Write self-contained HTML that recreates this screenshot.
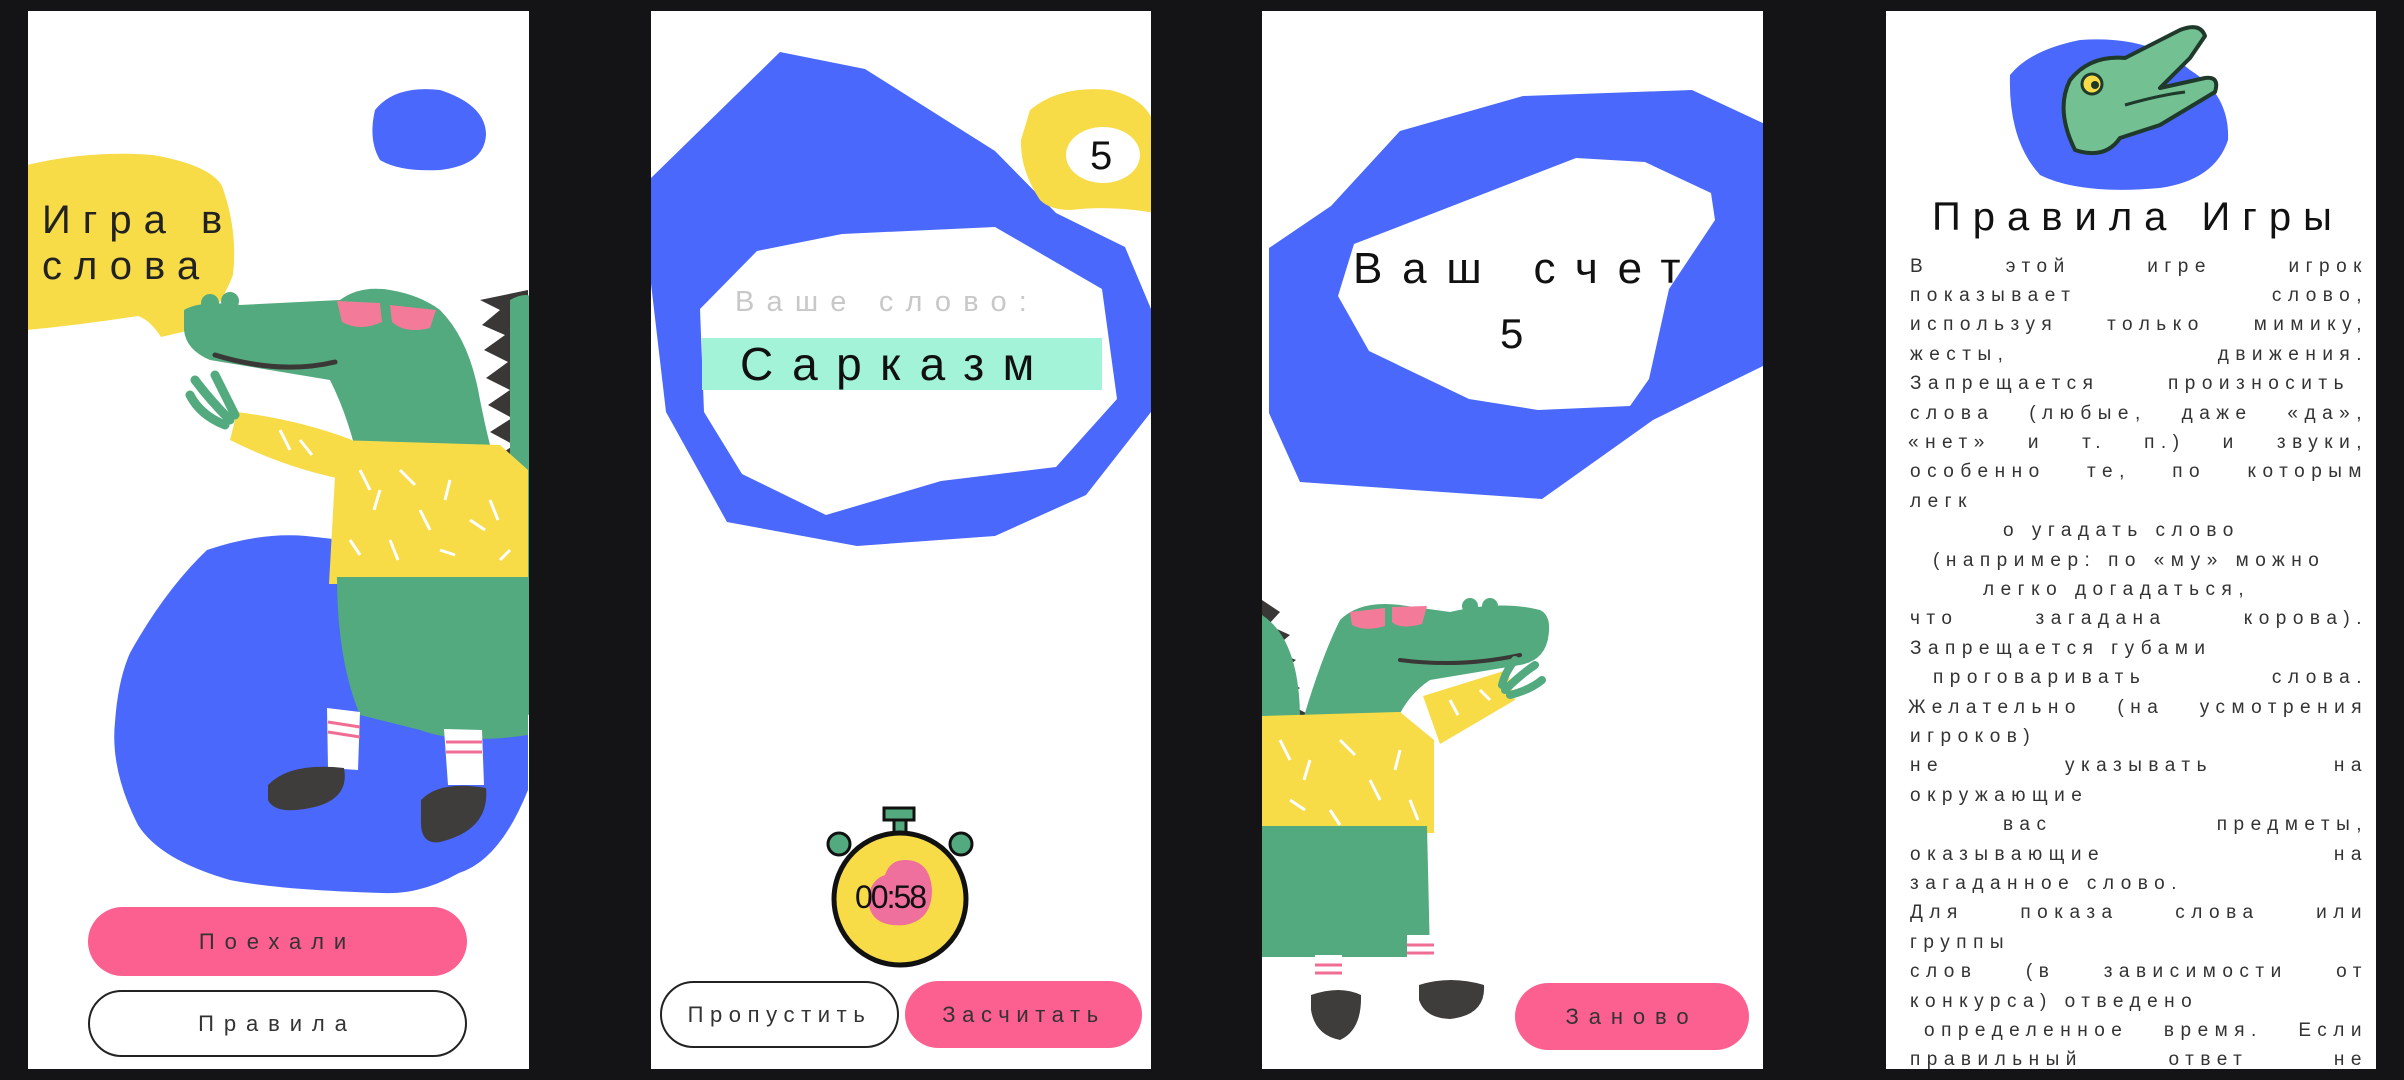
<!DOCTYPE html>
<html><head><meta charset="utf-8">
<style>
*{margin:0;padding:0;box-sizing:border-box}
body{width:2404px;height:1080px;background:#141416;position:relative;overflow:hidden;font-family:"Liberation Sans","DejaVu Sans",sans-serif;color:#222}
.t{position:absolute;white-space:nowrap}
.btn{position:absolute;border-radius:40px;display:flex;align-items:center;justify-content:center;font-size:22px;letter-spacing:0.45em;color:#333}
.pink{background:#fb6090}
.out{background:#fff;border:2px solid #222}
.ln{position:absolute;font-size:19px;letter-spacing:6.5px;color:#333;white-space:nowrap;height:29px;line-height:29px}
.j{text-align:justify;text-align-last:justify;white-space:normal;overflow:hidden}
</style></head><body>
<svg width="2404" height="1080" style="position:absolute;left:0;top:0">
<defs>
<clipPath id="c1"><rect x="28" y="11" width="501" height="1058"/></clipPath>
<clipPath id="c2"><rect x="651" y="11" width="500" height="1058"/></clipPath>
<clipPath id="c3"><rect x="1262" y="11" width="501" height="1058"/></clipPath>
<clipPath id="c4"><rect x="1886" y="11" width="490" height="1058"/></clipPath>
</defs>
<rect x="28" y="11" width="501" height="1058" fill="#fff"/>
<rect x="651" y="11" width="500" height="1058" fill="#fff"/>
<rect x="1262" y="11" width="501" height="1058" fill="#fff"/>
<rect x="1886" y="11" width="490" height="1058" fill="#fff"/>

<!-- panel 1 -->
<g clip-path="url(#c1)">
<path d="M375 110 Q395 85 440 90 Q486 105 486 135 Q484 165 440 170 Q400 172 380 160 Q368 140 375 110Z" fill="#4a68fb"/>
<path d="M27 165 Q90 150 153 155 Q210 165 222 186 Q238 230 233 275 Q215 320 191 330 L161 337 Q150 320 138 316 Q80 325 27 330Z" fill="#f7dc48"/>
<path d="M207 550 Q260 532 306 536 Q420 548 490 564 Q528 590 528 619 L528 790 Q500 860 459 873 Q420 895 383 893 Q280 890 230 880 Q160 860 138 825 Q110 770 115 722 Q118 680 130 653 Q165 590 207 550Z" fill="#4a68fb"/>
<path d="M480 300 L500 310 L482 325 L505 335 L484 350 L508 362 L486 378 L510 390 L488 405 L512 418 L490 432 L514 445 L492 460 L528 470 L528 290Z" fill="#3a3836"/>
<path d="M510 300 Q528 290 535 300 L535 720 L510 700Z" fill="#52aa7e"/>
<path d="M184 310 Q200 300 240 305 L340 300 Q360 285 390 290 Q420 295 440 310 Q470 340 480 400 Q490 450 500 480 L360 470 Q350 420 330 380 L210 360 Q186 350 184 330Z" fill="#52aa7e"/>
<circle cx="210" cy="303" r="9" fill="#52aa7e"/><circle cx="230" cy="301" r="9" fill="#52aa7e"/>
<path d="M215 355 Q280 375 335 362" stroke="#3a3836" stroke-width="5" fill="none" stroke-linecap="round"/>
<path d="M337 301 L380 303 L382 322 Q360 332 342 322Z M390 305 L436 310 L430 328 Q405 334 392 322Z" fill="#f47a9a"/>
<path d="M337 440 L500 445 L528 470 L528 584 L329 584Z" fill="#f7dc48"/>
<path d="M237 412 Q300 420 352 440 L352 481 Q290 470 230 440Z" fill="#f7dc48"/>
<path d="M230 420 Q210 400 195 380 M225 425 Q200 415 190 395 M235 415 Q225 395 215 375" stroke="#52aa7e" stroke-width="9" stroke-linecap="round"/>
<path d="M337 577 L528 577 L528 735 Q460 745 420 730 L360 715 Q337 660 337 577Z" fill="#52aa7e"/>
<path d="M327 708 L360 712 L358 770 L328 768Z M444 729 L482 730 L484 785 L448 785Z" fill="#fff"/>
<path d="M328 722 L360 727 M328 732 L360 737 M446 742 L482 742 M446 752 L482 752" stroke="#f06d94" stroke-width="3"/>
<path d="M268 785 Q290 762 344 768 Q350 800 310 808 Q275 815 268 800Z M421 800 Q440 780 486 788 Q490 830 440 842 Q420 845 421 820Z" fill="#3f3d3b"/>
<g stroke="#fff" stroke-width="3" fill="none"><path d="M360 470 l10 20 M380 490 l-6 20 M400 470 l15 15 M420 510 l10 20 M450 480 l-5 20 M470 520 l15 10 M350 540 l10 15 M390 540 l8 20 M440 550 l15 5 M490 500 l8 20 M500 560 l10 -10 M280 430 l10 20 M300 440 l12 15"/></g>
</g>

<!-- panel 2 -->
<g clip-path="url(#c2)">
<path fill-rule="evenodd" fill="#4a68fb" d="M650 179 L780 52 L865 69 L995 151 L1056 213 L1125 247 L1151 309 L1151 412 L1086 495 L995 536 L857 546 L727 522 L666 412 L650 275Z M757 251 L842 234 L995 227 L1102 289 L1117 399 L1056 467 L941 481 L826 515 L742 474 L704 412 L700 309Z"/>
<path d="M1030 110 Q1060 85 1110 90 Q1151 100 1155 130 L1155 213 Q1110 205 1070 210 Q1050 210 1040 200 Q1020 170 1021 140Z" fill="#f7dc48"/>
<ellipse cx="1103" cy="155" rx="37" ry="28" fill="#fff"/>
<rect x="702" y="338" width="400" height="52" fill="#a3f3d9"/>
<rect x="884" y="808" width="30" height="12" fill="#52aa7e" stroke="#111" stroke-width="3"/>
<rect x="894" y="820" width="12" height="14" fill="#52aa7e" stroke="#111" stroke-width="3"/>
<circle cx="839" cy="844" r="11" fill="#52aa7e" stroke="#111" stroke-width="3"/>
<circle cx="961" cy="844" r="11" fill="#52aa7e" stroke="#111" stroke-width="3"/>
<circle cx="900" cy="899" r="66" fill="#f7dc48" stroke="#111" stroke-width="5"/>
<path d="M905 860 Q930 860 932 890 Q932 920 905 925 Q870 928 868 900 Q870 880 885 875 Q890 860 905 860Z" fill="#ef6f9d"/>
</g>

<!-- panel 3 -->
<g clip-path="url(#c3)">
<path fill-rule="evenodd" fill="#4a68fb" d="M1269 248 L1331 206 L1400 131 L1523 96 L1692 90 L1765 124 L1765 365 L1653 420 L1542 499 L1300 482 L1269 413Z M1354 244 L1576 158 L1645 162 L1711 193 L1715 220 L1669 289 L1649 379 L1630 406 L1538 410 L1469 399 L1369 351 L1338 296Z"/>
<path d="M1262 600 L1280 612 L1268 625 L1290 635 L1272 650 L1296 660 L1276 675 L1300 688 L1280 700 L1310 715 L1262 720Z" fill="#3a3836"/>
<path d="M1262 615 Q1300 640 1300 720 L1262 720Z" fill="#52aa7e"/>
<path d="M1549 630 Q1548 660 1520 665 L1430 680 Q1400 700 1390 740 L1300 730 Q1320 660 1340 620 Q1360 600 1400 605 L1450 612 Q1500 600 1540 610 Q1550 615 1549 630Z" fill="#52aa7e"/>
<circle cx="1470" cy="606" r="8" fill="#52aa7e"/><circle cx="1490" cy="606" r="8" fill="#52aa7e"/>
<path d="M1400 660 Q1460 668 1520 655" stroke="#3a3836" stroke-width="4" fill="none" stroke-linecap="round"/>
<path d="M1350 612 L1385 608 L1385 626 Q1365 632 1352 625Z M1392 607 L1427 606 L1422 624 Q1400 630 1392 622Z" fill="#f47a9a"/>
<path d="M1261 716 L1400 712 L1434 740 L1434 833 L1261 833Z" fill="#f7dc48"/>
<path d="M1423 696 L1507 670 L1515 700 L1440 744Z" fill="#f7dc48"/>
<path d="M1505 690 Q1520 675 1535 665 M1510 695 Q1530 690 1542 680 M1502 685 Q1505 672 1515 660" stroke="#52aa7e" stroke-width="8" stroke-linecap="round"/>
<path d="M1261 826 L1427 826 L1430 957 L1261 957Z" fill="#52aa7e"/>
<path d="M1315 955 L1342 955 L1342 995 L1315 995Z M1407 935 L1434 935 L1434 980 L1407 980Z" fill="#fff"/>
<path d="M1315 965 L1342 965 M1315 973 L1342 973 M1407 945 L1434 945 M1407 953 L1434 953" stroke="#f06d94" stroke-width="3"/>
<path d="M1311 995 Q1340 985 1361 995 Q1362 1030 1340 1040 Q1315 1035 1311 1010Z M1419 985 Q1450 975 1484 985 Q1486 1015 1450 1019 Q1425 1018 1419 1000Z" fill="#3f3d3b"/>
<g stroke="#fff" stroke-width="3" fill="none"><path d="M1280 740 l10 20 M1310 760 l-6 20 M1340 740 l15 15 M1370 780 l10 20 M1400 750 l-5 20 M1290 800 l15 10 M1330 810 l10 15 M1410 800 l8 20 M1450 700 l8 15 M1480 690 l10 10"/></g>
</g>

<!-- panel 4 -->
<g clip-path="url(#c4)">
<path d="M2010 75 Q2030 50 2080 40 Q2150 35 2190 70 Q2230 95 2228 140 Q2215 180 2160 188 Q2080 195 2040 175 Q2008 140 2010 75Z" fill="#4a68fb"/>
<path d="M2075 150 Q2055 110 2070 80 Q2090 55 2125 58 L2180 30 Q2200 22 2205 36 L2190 58 L2160 88 L2205 78 Q2220 76 2215 92 L2160 125 L2120 138 Q2105 160 2075 150Z" fill="#73c092" stroke="#1f3a2a" stroke-width="4" stroke-linejoin="round"/>
<circle cx="2092" cy="84" r="10" fill="#f7dc48" stroke="#1f3a2a" stroke-width="3"/>
<circle cx="2095" cy="85" r="4" fill="#1f3a2a"/>
<path d="M2125 105 Q2160 95 2185 92" stroke="#1f3a2a" stroke-width="3" fill="none"/>
</g>
</svg>

<div class="t" style="left:42px;top:197px;font-size:40px;letter-spacing:0.3em;line-height:46px;color:#222">Игра в<br>слова</div>
<div class="btn pink" style="left:88px;top:907px;width:379px;height:69px">Поехали</div>
<div class="btn out" style="left:88px;top:990px;width:379px;height:67px">Правила</div>

<div class="t" style="left:1090px;top:134px;font-size:40px;color:#111">5</div>
<div class="t" style="left:735px;top:286px;font-size:29px;letter-spacing:0.42em;color:#c8c8c8">Ваше слово:</div>
<div class="t" style="left:740px;top:338px;font-size:46px;letter-spacing:0.4em;line-height:52px;color:#111">Сарказм</div>
<div class="t" style="left:855px;top:879px;font-size:32px;color:#111;letter-spacing:-2px">00:58</div>
<div class="btn out" style="left:660px;top:981px;width:239px;height:67px;font-size:22px;letter-spacing:0.3em">Пропустить</div>
<div class="btn pink" style="left:905px;top:981px;width:237px;height:67px;font-size:22px;letter-spacing:0.3em">Засчитать</div>

<div class="t" style="left:1353px;top:244px;font-size:44px;letter-spacing:0.45em;color:#111">Ваш счет</div>
<div class="t" style="left:1500px;top:310px;font-size:42px;color:#111">5</div>
<div class="btn pink" style="left:1515px;top:983px;width:234px;height:67px;font-size:22px;letter-spacing:0.45em">Заново</div>

<div class="t" style="left:1932px;top:195px;font-size:40px;letter-spacing:0.3em;color:#111">Правила Игры</div>
<div class="ln j" style="left:1910px;top:252px;width:458px">В этой игре игрок</div>
<div class="ln j" style="left:1910px;top:281px;width:458px">показывает слово,</div>
<div class="ln j" style="left:1910px;top:310px;width:458px">используя только мимику,</div>
<div class="ln j" style="left:1910px;top:340px;width:458px">жесты, движения.</div>
<div class="ln j" style="left:1910px;top:369px;width:440px">Запрещается произносить</div>
<div class="ln j" style="left:1910px;top:399px;width:458px">слова (любые, даже «да»,</div>
<div class="ln j" style="left:1908px;top:428px;width:460px">«нет» и т. п.) и звуки,</div>
<div class="ln j" style="left:1910px;top:457px;width:458px">особенно те, по которым</div>
<div class="ln" style="left:1910px;top:487px">легк</div>
<div class="ln" style="left:2003px;top:516px">о угадать слово</div>
<div class="ln" style="left:1933px;top:546px">(например: по «му» можно</div>
<div class="ln" style="left:1983px;top:575px">легко догадаться,</div>
<div class="ln j" style="left:1910px;top:604px;width:458px">что загадана корова).</div>
<div class="ln" style="left:1910px;top:634px">Запрещается губами</div>
<div class="ln j" style="left:1933px;top:663px;width:435px">проговаривать слова.</div>
<div class="ln j" style="left:1908px;top:693px;width:460px">Желательно (на усмотрения</div>
<div class="ln" style="left:1910px;top:722px">игроков)</div>
<div class="ln j" style="left:1910px;top:751px;width:458px">не указывать на</div>
<div class="ln" style="left:1910px;top:781px">окружающие</div>
<div class="ln j" style="left:2003px;top:810px;width:365px">вас предметы,</div>
<div class="ln j" style="left:1910px;top:840px;width:458px">оказывающие на</div>
<div class="ln" style="left:1910px;top:869px">загаданное слово.</div>
<div class="ln j" style="left:1910px;top:898px;width:458px">Для показа слова или</div>
<div class="ln" style="left:1910px;top:928px">группы</div>
<div class="ln j" style="left:1910px;top:957px;width:458px">слов (в зависимости от</div>
<div class="ln" style="left:1910px;top:987px">конкурса) отведено</div>
<div class="ln j" style="left:1924px;top:1016px;width:444px">определенное время. Если</div>
<div class="ln j" style="left:1910px;top:1045px;width:458px;height:24px">правильный ответ не</div>
</body></html>
